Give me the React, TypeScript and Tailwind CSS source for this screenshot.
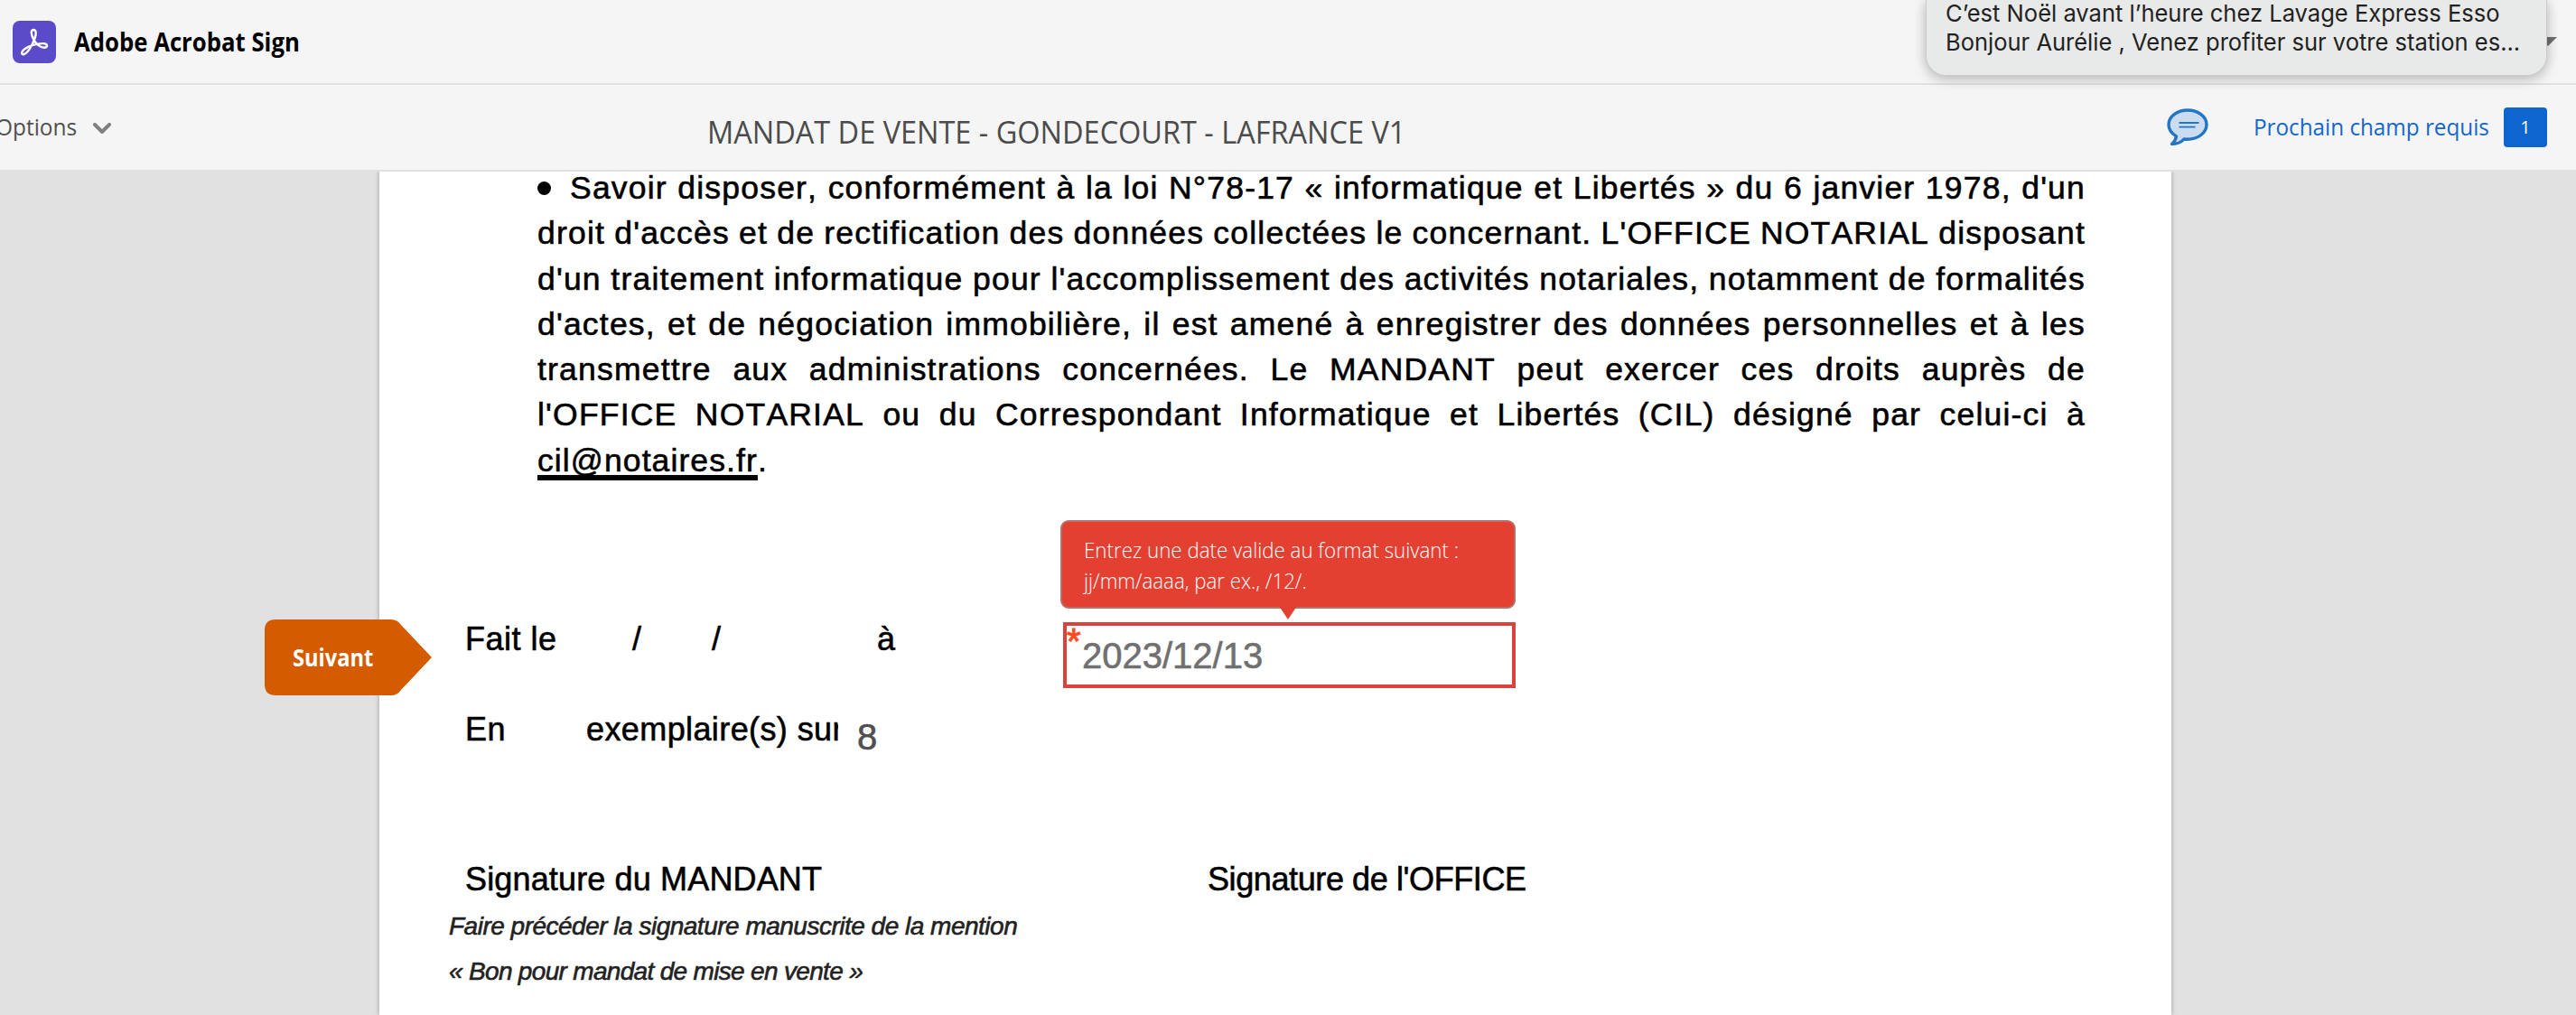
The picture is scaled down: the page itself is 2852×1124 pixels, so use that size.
import React from 'react';

const PARAGRAPH = [
  "droit d'accès et de rectification des données collectées le concernant. L'OFFICE NOTARIAL disposant",
  "d'un traitement informatique pour l'accomplissement des activités notariales, notamment de formalités",
  "d'actes, et de négociation immobilière, il est amené à enregistrer des données personnelles et à les",
  "transmettre aux administrations concernées. Le MANDANT peut exercer ces droits auprès de",
  "l'OFFICE NOTARIAL ou du Correspondant Informatique et Libertés (CIL) désigné par celui-ci à",
];

const CLEAN = "font-['Open_Sans',sans-serif] whitespace-nowrap origin-left inline-block";

function AcrobatLogo() {
  return (
    <div className="w-12 h-[47px] rounded-lg bg-[#5a4bc9] flex-none">
      <svg viewBox="0 0 48 47" className="w-12 h-[47px]" fill="none" stroke="#fff" strokeWidth="2.4" strokeLinejoin="round">
        <path d="M23 10C19.500 10 20.500 16.500 23.800 22C27.500 27.500 33 30.500 36.500 29.500C39 28.500 38.500 25.500 34.500 25.200C28.500 24.700 18.500 27.500 13 31.500C9 34.500 9.500 38 12.500 37C17 35.500 22 26.500 24.500 19.500C26.500 14 26 10 23 10z" />
      </svg>
    </div>
  );
}

function ChatIcon() {
  return (
    <svg viewBox="0 0 46 42" className="w-[46px] h-[42px]" fill="none" stroke="#2376c4" strokeLinejoin="round">
      <path d="M23 2C11.500 2 2 9 2 18c0 5.500 3.500 10 8.500 13-.5 3.500-2 6-5 8.500 6 0 10.500-2 13.500-5.500 1.300.2 2.600.2 4 .2 11.500 0 21-7.200 21-16.200S34.500 2 23 2z" fill="#cbdcf0" strokeWidth="3.400" />
      <path d="M13.500 16h22M13.500 20.600h18" strokeWidth="1.800" />
    </svg>
  );
}

function Notification() {
  return (
    <div className="absolute z-10 left-[2132px] top-0 w-[688px] h-[84px] rounded-b-[22px] bg-[#e8eae9] border border-t-0 border-[#c9cac9] shadow-[0_3px_14px_rgba(0,0,0,0.28)] pl-[21px] font-['Inter',sans-serif] text-[26px] leading-8 text-[#222] whitespace-nowrap">
      <div className="-mt-px"><span className="inline-block origin-left scale-x-[.982]">C’est Noël avant l’heure chez Lavage Express Esso</span></div>
      <div><span className="inline-block origin-left scale-x-[.981]">Bonjour Aurélie , Venez profiter sur votre station es...</span></div>
    </div>
  );
}

function Toolbar() {
  return (
    <div className="relative h-24 flex-none bg-[#f5f5f5] border-b-2 border-[#e1e1e1] flex items-center">
      <span className={`${CLEAN} -ml-[5px] mt-[-2px] text-[26px] text-[#505050] w-[108px] scale-x-[.94]`}>Options</span>
      <svg viewBox="0 0 20 12" className="w-5 h-3 mt-[1px]" fill="none" stroke="#808080" strokeWidth="4" strokeLinecap="round" strokeLinejoin="round">
        <path d="M2 2l8 8 8-8" />
      </svg>
      <h1 className={`${CLEAN} ml-[660px] mt-[11px] text-[34px] text-[#4b4b4b] w-[769px] scale-x-[.955]`}>MANDAT DE VENTE - GONDECOURT - LAFRANCE V1</h1>
      <div className="ml-auto pr-8 flex items-center">
        <ChatIcon />
        <span className={`${CLEAN} ml-[50px] mt-[-2px] w-[277px] text-[26px] text-[#1267cc] scale-x-[.933]`}>Prochain champ requis</span>
        <span className="w-12 h-11 rounded-[4px] bg-[#0d66d0] text-white text-[20px] font-['Open_Sans',sans-serif] flex items-center justify-center">1</span>
      </div>
    </div>
  );
}

function DateField() {
  return (
    <div className="absolute left-[754px] top-[386px] w-[504px]">
      <div className="relative h-[98px] rounded-[9px] border-2 border-[#b5706b] bg-[#e34032] text-white pt-[14px] pl-[24px] text-[24px] leading-[33px] font-light">
        <div><span className={`${CLEAN} scale-x-[.93]`}>Entrez une date valide au format suivant :</span></div>
        <div><span className={`${CLEAN} scale-x-[.927]`}>jj/mm/aaaa, par ex., /12/.</span></div>
        <svg viewBox="0 0 20 15" className="absolute left-[240px] top-[93px] w-5 h-[15px]">
          <path d="M0 0h20L10 15z" fill="#e34032" />
        </svg>
      </div>
      <div className="relative ml-[3px] mt-[15px] h-[73px] w-[501px] border-4 border-[#d7433d] pl-[17px] text-[40px] leading-[67px] text-[#707070] font-['Liberation_Sans',sans-serif] [-webkit-text-stroke:0.6px]">
        <span className="absolute left-0 top-[-3px] text-[40px] leading-10 text-[#ff4b1f] [-webkit-text-stroke:1px]">*</span>
        2023/12/13
      </div>
    </div>
  );
}

function NextFlag() {
  return (
    <div className="absolute left-[293px] top-[496px] w-[185px] h-[84px]">
      <svg viewBox="0 0 185 84" className="absolute inset-0">
        <path d="M12 0H140q7 0 11 6L185 42 151 78q-4 6-11 6H12Q0 84 0 72V12Q0 0 12 0z" fill="#d45b00" />
      </svg>
      <span className={`${CLEAN} absolute left-[31px] top-[24px] text-[26px] leading-9 font-bold text-white scale-x-[.91]`}>Suivant</span>
    </div>
  );
}

function App() {
  return (
    <div className="relative w-[2852px] h-[1124px] overflow-hidden bg-[#e1e1e1] flex flex-col">
      <header className="h-[94px] flex-none bg-[#f5f5f5] border-b-2 border-[#e1e1e1] flex items-center pl-[14px]">
        <AcrobatLogo />
        <span className={`${CLEAN} ml-5 text-[28px] font-bold text-black scale-x-[.919]`}>Adobe Acrobat Sign</span>
        <svg viewBox="0 0 20 10" className="absolute left-[2811px] top-[41px] w-5 h-2.5"><path d="M0 0h20L10 10z" fill="#707070" /></svg>
      </header>
      <Notification />
      <Toolbar />

      <main className="relative flex-1">
        <div className="ml-[420px] w-[1984px] h-full relative flow-root bg-white shadow-[0_0_5px_rgba(0,0,0,0.3)] text-black font-['Liberation_Sans',sans-serif] text-[36px] [clip-path:inset(0_-6px)]">
          <div className="pl-[175px] w-[1889px] -mt-[7px] leading-[50.3px] tracking-[1.2px] text-[35.5px] whitespace-nowrap [word-spacing:-6px] [font-kerning:none] [-webkit-text-stroke:0.6px]">
            <div className="flex items-center">
              <span className="w-[15px] h-[15px] rounded-full bg-black mr-[21px]" />
              <span className="flex-1 [text-align-last:justify]">Savoir disposer, conformément à la loi N°78-17 « informatique et Libertés » du 6 janvier 1978, d'un</span>
            </div>
            {PARAGRAPH.map((line) => (
              <div key={line} className="[text-align-last:justify]">{line}</div>
            ))}
            <div className="tracking-[1.1px]">
              <span className="underline decoration-[6px] underline-offset-[4px] [text-decoration-skip-ink:none]">cil@notaires.fr</span>.
            </div>
          </div>

          <div className="absolute left-[95px] top-[498px] flex leading-[40px] tracking-[0.5px] [-webkit-text-stroke:0.6px]">
            <span className="w-[185px]">Fait le</span>
            <span className="w-[88px]">/</span>
            <span className="w-[183px]">/</span>
            <span>à</span>
          </div>
          <div className="absolute left-[95px] top-[598px] flex leading-[40px] tracking-[0.4px] [-webkit-text-stroke:0.6px]">
            <span className="w-[134px]">En</span>
            <span className="w-[279px] overflow-hidden whitespace-nowrap">exemplaire(s) sur</span>
            <span className="ml-[21px] mt-[8px] text-[40px] text-[#505050]">8</span>
          </div>

          <div className="absolute left-[95px] top-[764px] flex leading-[40px] [-webkit-text-stroke:0.6px]">
            <span className="w-[822px] tracking-[0.15px]">Signature du MANDANT</span>
            <span className="tracking-[-0.4px]">Signature de l'OFFICE</span>
          </div>
          <div className="absolute left-[77px] top-[811px] text-[28px] leading-[50px] italic text-[#222] [-webkit-text-stroke:0.6px]">
            <div className="tracking-[-0.5px]">Faire précéder la signature manuscrite de la mention</div>
            <div className="tracking-[-0.68px]">« Bon pour mandat de mise en vente »</div>
          </div>
          <DateField />
        </div>
        <NextFlag />
      </main>
    </div>
  );
}

export default App;
